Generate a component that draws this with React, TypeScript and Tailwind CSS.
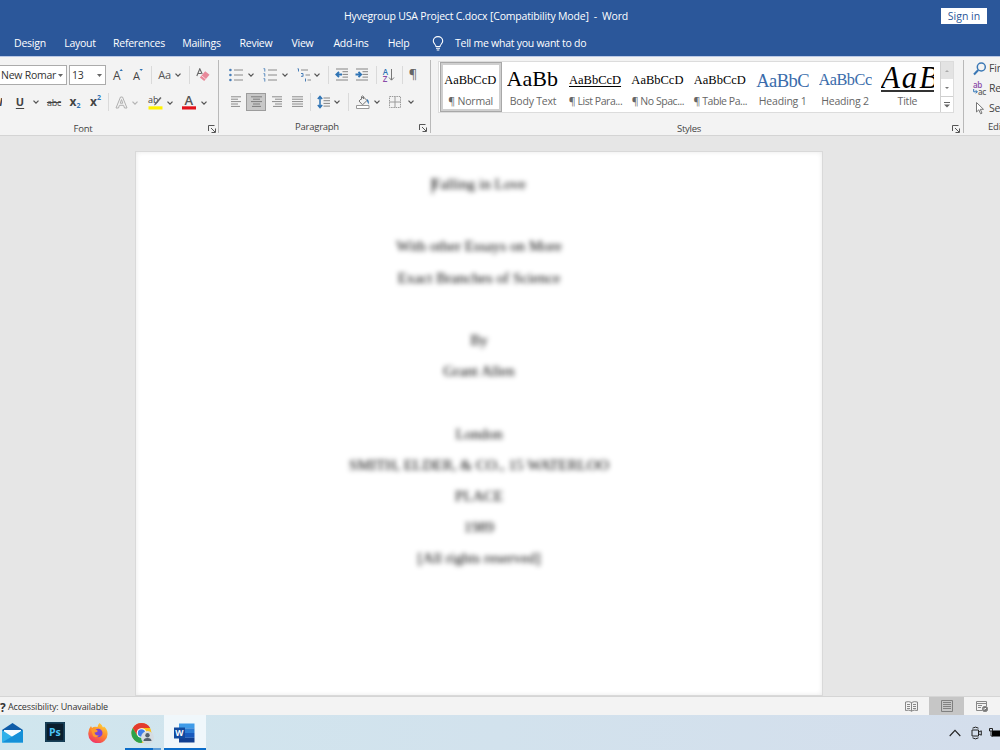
import type { ReactNode } from "react";
import { clsx } from "clsx";

function Cell({ className, children }: { className: string; children?: ReactNode }) {
  return <div className={clsx("flex h-full shrink-0 items-center justify-center", className)}>{children}</div>;
}

function Chevron({ faded = false }: { faded?: boolean }) {
  return (
    <svg className="shrink-0" width="6" height="4" viewBox="0 0 6 4" fill="none" stroke={faded ? "#b5b5b5" : "#555"} strokeWidth="1.3">
      <path d="M0.5 0.6 3 3.1 5.5 0.6" />
    </svg>
  );
}

function Sep() {
  return <div className="h-[18px] w-px bg-[#dadada]" />;
}

function Launcher() {
  return (
    <svg width="8" height="8" viewBox="0 0 8 8" fill="none" stroke="#555" strokeWidth="1">
      <path d="M0.5 6V0.5H6.5M3 3 7 7M7.5 3.5V7.5H3.5" />
    </svg>
  );
}

function GroupDivider() {
  return <div className="mt-[3px] h-[73px] w-px shrink-0 bg-[#b9b9b9]" />;
}

// linhas de alinhamento
function Lines({ rows, color = "#8c8c8c" }: { rows: number[][]; color?: string }) {
  return (
    <svg width="13" height="13" viewBox="0 0 13 13" stroke={color} strokeWidth="1">
      {rows.map(([x1, x2], i) => (
        <path key={i} d={`M${x1} ${i * 2.4 + 1.8}H${x2}`} />
      ))}
    </svg>
  );
}

function ListIcon({ numbered = false }: { numbered?: boolean }) {
  return (
    <svg className="shrink-0" width="14" height="14" viewBox="0 0 14 14">
      {[2, 7, 12].map((y) => (
        <g key={y}>
          {numbered ? (
            <path d={`M0.5 ${y - 1.3}H1.8V${y + 1.6}`} stroke="#4a7fb8" fill="none" strokeWidth="0.9" />
          ) : (
            <circle cx="1.4" cy={y} r="1.3" fill="#4a7fb8" />
          )}
          <path d={`M5 ${y}H14`} stroke="#8a8a8a" strokeWidth="1" />
        </g>
      ))}
    </svg>
  );
}

function IndentIcon({ out = false }: { out?: boolean }) {
  return (
    <svg className="shrink-0" width="14" height="13" viewBox="0 0 14 13" fill="none">
      <path d="M1 1H13M7.5 3.7H13M7.5 6.4H13M7.5 9.1H13M1 12H13" stroke="#858585" />
      <path d={out ? "M7 6.5H1.6M4 3.8 1.3 6.5 4 9.2" : "M0.5 6.5H5.9M3.5 3.8 6.2 6.5 3.5 9.2"} stroke="#2f74b5" strokeWidth="1.8" />
    </svg>
  );
}

const tabs = [
  { label: "Design", className: "w-[50px]" },
  { label: "Layout", className: "w-[50px]" },
  { label: "References", className: "w-[68px]" },
  { label: "Mailings", className: "w-[57px]" },
  { label: "Review", className: "w-[52px]" },
  { label: "View", className: "w-[41px]" },
  { label: "Add-ins", className: "w-[56px]" },
  { label: "Help", className: "w-[39px]" },
];

function TitleBar() {
  return (
    <header className="flex h-[57px] shrink-0 flex-col border-b border-[#b9c8e6] bg-[#2b579a] text-white">
      <div className="flex h-[31px] items-center pt-px">
        <div className="w-[344px]" />
        <div className="w-[597px] pt-px text-[10.5px] tracking-[-0.18px] whitespace-pre">Hyvegroup USA Project C.docx [Compatibility Mode]  -  Word</div>
        <div className="flex h-4 w-[46px] items-center justify-center bg-white pt-px text-[10.5px] text-[#2b579a]">Sign in</div>
      </div>
      <nav className="flex h-[25px] items-center pl-[5px] text-[10.5px] tracking-[-0.25px]">
        {tabs.map((t) => (
          <div key={t.label} className={clsx("shrink-0 pt-px text-center", t.className)}>{t.label}</div>
        ))}
        <svg className="ml-[14px]" width="12" height="15" viewBox="0 0 12 15" fill="none" stroke="#fff" strokeWidth="1.1">
          <path d="M4 10.5C4 8.5 1.3 7.8 1.3 5A4.7 4.4 0 0 1 10.7 5C10.7 7.8 8 8.5 8 10.5ZM4 12.3H8M4.7 14H7.3" />
        </svg>
        <div className="ml-[11px] whitespace-nowrap">Tell me what you want to do</div>
      </nav>
    </header>
  );
}

function FontGroup() {
  return (
    <section className="flex w-[218px] shrink-0 flex-col overflow-hidden">
      <div className="mt-2 flex h-5 items-center">
        <div className="flex h-5 w-[67px] shrink-0 items-center justify-between border border-l-0 border-[#ababab] bg-white pt-px pr-[3px] pl-px">
          <span className="text-[10.5px] tracking-[-0.25px] whitespace-nowrap">New Romar</span>
          <Triangle />
        </div>
        <div className="ml-0.5 flex h-5 w-[37px] shrink-0 items-center justify-between border border-[#ababab] bg-white pt-px pr-[3px] pl-[2px]">
          <span className="text-[10.5px] tracking-[-0.2px]">13</span>
          <Triangle />
        </div>
        <Cell className="ml-[2px] w-5"><LetterCaret up /></Cell>
        <Cell className="w-5"><LetterCaret /></Cell>
        <Cell className="w-[6px]"><Sep /></Cell>
        <Cell className="w-[21px] text-[11px] tracking-[-0.3px] text-[#555]">Aa</Cell>
        <Cell className="w-[6px]"><Chevron /></Cell>
        <Cell className="w-4"><Sep /></Cell>
        <Cell className="w-3">
          <svg width="14" height="14" viewBox="0 0 14 14" className="shrink-0">
            <path d="M0.8 8 3.8 0.8 6.2 6M2 5.5H5.2" stroke="#666" fill="none" strokeWidth="1.1" />
            <path d="M9.2 3.3 13.5 6.8 8.2 13 3.8 9.5Z" fill="#e8899a" />
            <path d="M5.5 7.7 9.8 11.2" stroke="#fbe3e7" strokeWidth="0.8" />
          </svg>
        </Cell>
      </div>
      <div className="mt-[7px] flex h-5 items-center text-[#444]">
        <Cell className="w-[2px] overflow-hidden text-[11px] italic"><b>I</b></Cell>
        <Cell className="ml-2 w-5 pt-px text-[11px] font-bold underline underline-offset-2">U</Cell>
        <Cell className="w-[11px] pt-px"><Chevron /></Cell>
        <Cell className="w-[26px] pt-[2px] text-[9px] tracking-[-0.2px] line-through">abc</Cell>
        <Cell className="w-[16px] pt-px text-[12px] font-bold">x<span className="mt-2 text-[7px] text-[#2f74b5]">2</span></Cell>
        <Cell className="w-[25px] pt-px text-[12px] font-bold">x<span className="mb-2 text-[7px] text-[#2f74b5]">2</span></Cell>
        <Cell className="w-px pt-px"><Sep /></Cell>
        <Cell className="w-[24px] pt-[2px]">
          <svg width="13" height="13" viewBox="0 0 13 13" fill="none" stroke="#b0b0b0" strokeWidth="1">
            <path d="M1 12 5.5 1H7.5L12 12H9.5L8.6 9.3H4.4L3.5 12ZM5.2 7.2H7.8L6.5 3.6Z" />
          </svg>
        </Cell>
        <Cell className="w-1 pt-[2px]"><Chevron faded /></Cell>
        <Cell className="ml-[9px] w-[18px] pt-[2px]">
          <svg className="overflow-visible" width="15" height="15" viewBox="0 0 15 15">
            <text x="0" y="8" fontSize="9" fill="#444">ab</text>
            <path d="M13.5 3 8 9.5 6 10.5 6.8 8.5 12.3 2Z" fill="#666" />
            <path d="M0.5 11.3H14.5V14.5H0.5Z" fill="#fff200" />
          </svg>
        </Cell>
        <Cell className="w-3 pt-[2px]"><Chevron /></Cell>
        <Cell className="ml-[5px] w-[16px] pt-[2px]">
          <svg className="overflow-visible" width="14" height="15" viewBox="0 0 14 15">
            <text x="2.6" y="10" fontSize="13" fontWeight="600" fill="#555">A</text>
            <path d="M0 11.3H14V14.5H0Z" fill="#e3131c" />
          </svg>
        </Cell>
        <Cell className="w-[14px] pt-[2px]"><Chevron /></Cell>
      </div>
      <GroupLabel className="pr-[2px] pl-[18px]">Font</GroupLabel>
    </section>
  );
}

function Triangle() {
  return (
    <svg width="5" height="3" viewBox="0 0 5 3" className="shrink-0" fill="#666">
      <path d="M0 0H5L2.5 3Z" />
    </svg>
  );
}

function LetterCaret({ up = false }: { up?: boolean }) {
  return (
    <svg className="overflow-visible" width="12" height="14" viewBox="0 0 12 14">
      <text x="1" y="12" fontSize={up ? 12 : 11} fill="#444">A</text>
      <path d={up ? "M7.5 3 9.2 1 10.9 3Z" : "M7.5 1H10.9L9.2 3Z"} fill="#2f74b5" />
    </svg>
  );
}

function GroupLabel({ className, children }: { className: string; children: ReactNode }) {
  return (
    <div className={clsx("mt-[10px] flex h-4 items-center justify-between text-[9.5px] tracking-[-0.25px] text-[#444]", className)}>
      <div className="w-[130px] text-center">{children}</div>
      <Launcher />
    </div>
  );
}

function ParagraphGroup() {
  return (
    <section className="flex w-[211px] shrink-0 flex-col">
      <div className="mt-2 flex h-5 items-center">
        <Cell className="ml-[9px] w-[15px]"><ListIcon /></Cell>
        <Cell className="w-4"><Chevron /></Cell>
        <Cell className="ml-[2px] w-[17px]"><ListIcon numbered /></Cell>
        <Cell className="w-[13px]"><Chevron /></Cell>
        <Cell className="ml-[5px] w-[15px]">
          <svg width="14" height="14" viewBox="0 0 14 14" fill="none">
            <path d="M0.5 0.8H1.5V3.5M4 5.5H6V8M4 8.3H6.3M8.5 10.5V13.5" stroke="#4a7fb8" />
            <path d="M4 2H11M8.5 7H13M10.5 12H14" stroke="#8a8a8a" />
          </svg>
        </Cell>
        <Cell className="w-[11px]"><Chevron /></Cell>
        <Cell className="w-[13px]"><Sep /></Cell>
        <Cell className="w-[13px]"><IndentIcon out /></Cell>
        <Cell className="w-[28px]"><IndentIcon /></Cell>
        <Sep />
        <Cell className="ml-[5px] w-[14px]">
          <div className="flex items-center">
            <div className="flex flex-col text-[8px] leading-[7px] font-semibold">
              <span className="text-[#2f74b5]">A</span>
              <span className="text-[#8a4ba8]">Z</span>
            </div>
            <svg width="7" height="14" viewBox="0 0 7 14" fill="none" stroke="#777">
              <path d="M3.5 1V12M1 9.5 3.5 12.2 6 9.5" />
            </svg>
          </div>
        </Cell>
        <Cell className="w-[12px]"><Sep /></Cell>
        <Cell className="w-[10px] text-[13px] text-[#666]">¶</Cell>
      </div>
      <div className="mt-2 flex h-5 items-center">
        <Cell className="ml-[7px] w-5"><Lines rows={[[1, 11], [1, 8], [1, 11], [1, 8], [1, 10]]} /></Cell>
        <Cell className="w-5 border border-[#9c9c9c] bg-[#c8c8c8]"><Lines rows={[[1, 12], [3, 10], [1, 12], [3, 10], [2, 11]]} color="#7c7c7c" /></Cell>
        <Cell className="w-[21px]"><Lines rows={[[2, 12], [5, 12], [2, 12], [5, 12], [3, 12]]} /></Cell>
        <Cell className="w-[21px]"><Lines rows={[[1, 12], [1, 12], [1, 12], [1, 12], [1, 12]]} /></Cell>
        <Cell className="w-[4px]"><Sep /></Cell>
        <Cell className="ml-[2px] w-[18px]">
          <svg width="13" height="14" viewBox="0 0 13 14" fill="none">
            <path d="M3 1.5V12.5M0.8 4 3 1.5 5.2 4M0.8 10 3 12.5 5.2 10" stroke="#2f74b5" strokeWidth="1.5" />
            <path d="M6.5 3H13M6.5 5.7H13M6.5 8.4H13M6.5 11.1H13" stroke="#858585" />
          </svg>
        </Cell>
        <Cell className="w-[10px]"><Chevron /></Cell>
        <Cell className="w-[12px]"><Sep /></Cell>
        <Cell className="w-[17px]">
          <svg width="14" height="14" viewBox="0 0 14 14" fill="none">
            <path d="M3 6 7.3 1.8 11 5.5 6.5 9.8ZM5.5 4.5V1.5Q6.5 0.2 7.5 1.5V4" stroke="#777" />
            <path d="M10.8 4Q13.6 5 12.5 9.5L11 6Z" fill="#2f74b5" />
            <path d="M0.5 10.5H13V13.5H0.5Z" stroke="#999" fill="#fff" />
          </svg>
        </Cell>
        <Cell className="w-3"><Chevron /></Cell>
        <Cell className="w-[24px]">
          <svg width="12" height="12" viewBox="0 0 12 12" fill="none" stroke="#9a9a9a">
            <path d="M0.5 0.5H11.5V11.5H0.5Z" strokeDasharray="1.5 0.8" />
            <path d="M6 0.5V11.5M0.5 6H11.5" />
          </svg>
        </Cell>
        <Cell className="w-2"><Chevron /></Cell>
      </div>
      <div className="-mt-px">
        <GroupLabel className="pr-[3px] pl-[33px]">Paragraph</GroupLabel>
      </div>
    </section>
  );
}

const estilos = [
  { label: "¶ Normal", sample: "AaBbCcD", className: "pt-[12px] text-[12.5px] text-black", active: true },
  { label: "Body Text", sample: "AaBb", className: "pt-[6px] text-[22px] text-black" },
  { label: "¶ List Para...", sample: "AaBbCcD", className: "pt-[12px] text-[12.5px] text-black underline underline-offset-2", tight: true },
  { label: "¶ No Spac...", sample: "AaBbCcD", className: "pt-[12px] text-[12.5px] text-black", tight: true },
  { label: "¶ Table Pa...", sample: "AaBbCcD", className: "pt-[12px] text-[12.5px] text-black", tight: true },
  { label: "Heading 1", sample: "AaBbC", className: "pt-[10px] text-[18.5px] tracking-[-0.5px] text-[#3a6cab]" },
  { label: "Heading 2", sample: "AaBbCcI", className: "pt-[10px] text-[16.3px] tracking-[-0.5px] text-[#3a6cab]" },
  { label: "Title", sample: "AaB", className: "text-[31px] tracking-[2px] italic text-black border-b-2 border-[#333]" },
];

function StylesGroup() {
  return (
    <section className="flex w-[532px] shrink-0 flex-col pl-[7px]">
      <div className="mt-[4px] flex h-[52px] w-[516px] border border-[#dcdcdc] bg-white">
        <div className="flex w-[501px] pl-px">
          {estilos.map((e) => (
            <div
              key={e.label}
              className={clsx(
                "flex h-[50px] w-[62.4px] shrink-0 flex-col items-center",
                e.active && "shadow-[inset_0_0_0_1px_#a8a8a8,inset_0_0_0_3px_#cfcfcf]"
              )}
            >
              <div className="flex h-[32px] w-[54px] justify-start">
                <div
                  className={clsx(
                    "flex h-[30px] w-[53px] overflow-hidden font-['Liberation_Serif',serif] leading-none whitespace-nowrap",
                    e.className
                  )}
                >
                  {e.sample}
                </div>
              </div>
              <div
                className={clsx(
                  "pr-px text-[10.5px] leading-[14px] whitespace-nowrap text-[#666]",
                  e.tight ? "tracking-[-0.45px]" : "tracking-[-0.2px]"
                )}
              >
                {e.label}
              </div>
            </div>
          ))}
        </div>
        <div className="flex w-[13px] flex-col border-l border-[#d0d0d0]">
          <div className="flex h-[17px] items-center justify-center bg-[#e3e3e3]">
            <svg width="4" height="2" viewBox="0 0 4 2" fill="#aaa"><path d="M0 2H4L2 0Z" /></svg>
          </div>
          <div className="flex h-[18px] items-center justify-center border-b border-[#d0d0d0]">
            <svg width="4" height="2" viewBox="0 0 4 2" fill="#777"><path d="M0 0H4L2 2Z" /></svg>
          </div>
          <div className="flex flex-1 items-center justify-center">
            <svg width="6" height="6" viewBox="0 0 6 6" fill="#666"><path d="M0 0H6V1H0ZM0 2.5H6L3 5.5Z" /></svg>
          </div>
        </div>
      </div>
      <div className="mt-[8px] flex h-4 items-center justify-between pr-[3px] pl-[186px] text-[9.5px] tracking-[-0.25px] text-[#444]">
        <div className="w-[130px] pt-px text-center">Styles</div>
        <Launcher />
      </div>
    </section>
  );
}

function EditingGroup() {
  return (
    <section className="flex w-[36px] shrink-0 flex-col overflow-hidden pl-[9px] text-[10.5px] tracking-[-0.2px] text-[#444]">
      <div className="mt-[2px] flex h-[21px] items-center gap-[2px]">
        <svg className="shrink-0" width="14" height="14" viewBox="0 0 14 14" fill="none" stroke="#3b78b5" strokeWidth="1.5">
          <circle cx="8.3" cy="5" r="4" />
          <path d="M5.3 8 1 12.5" strokeWidth="2" />
        </svg>
        Find
      </div>
      <div className="flex h-5 items-center gap-[2px]">
        <div className="flex w-[14px] shrink-0 flex-col text-[8px] leading-[7px] font-semibold tracking-[-0.3px]">
          <span className="text-[#8a4ba8]">ab</span>
          <span className="flex items-center text-[#666]">
            <svg width="5" height="5" viewBox="0 0 5 5" fill="none" stroke="#2f74b5">
              <path d="M0.7 0V2.8H4.2M2.8 1.2 4.3 2.8 2.8 4.4" />
            </svg>
            ac
          </span>
        </div>
        Replace
      </div>
      <div className="flex h-[21px] items-center gap-[2px] pt-px">
        <svg className="shrink-0" width="14" height="14" viewBox="0 0 14 14" fill="#fff" stroke="#777">
          <path d="M3.5 1.5V11L5.8 8.8 7.6 12.8 9 12.2 7.3 8.3H10.5Z" />
        </svg>
        Select
      </div>
      <div className="pt-px pl-[15px] text-[9.5px] leading-4">Editing</div>
    </section>
  );
}

// cada string vazia é uma linha em branco
const pagina = [
  "Falling in Love",
  "",
  "With other Essays on More",
  "Exact Branches of Science",
  "",
  "By",
  "Grant Allen",
  "",
  "London",
  "SMITH, ELDER, & CO., 15 WATERLOO",
  "PLACE",
  "1989",
  "[All rights reserved]",
];

function DocumentArea() {
  return (
    <main className="flex h-[560px] shrink-0 overflow-hidden bg-[#e6e6e6] pt-[15px] pl-[135px]">
      <div className="h-[545px] w-[688px] border border-[#d9d9d9] bg-white pt-[16px] shadow-[inset_0_0_5px_#e9e9e9]">
        <div className="text-center font-['Liberation_Serif',serif] text-[15.2px] text-black blur-[2.4px]">
          {pagina.map((linha, i) => (
            <div key={i} className="h-[31.2px] leading-[31.2px]">
              {i === 0 && <span className="mr-[-1px] inline-block h-4 w-px bg-black align-middle" />}
              {linha}
            </div>
          ))}
        </div>
      </div>
    </main>
  );
}

function StatusBar() {
  return (
    <div className="flex h-[19px] shrink-0 items-center border-t border-[#d5d5d5] bg-[#f3f3f3] text-[9px] tracking-[-0.15px] text-[#333]">
      <div className="w-2 overflow-hidden pt-[3px] text-[12px] leading-[15px] font-bold">?</div>
      <div className="w-[886px] pt-px">Accessibility: Unavailable</div>
      <Cell className="w-[35px]">
        <svg width="13" height="11" viewBox="0 0 13 11" fill="none" stroke="#888">
          <path d="M6.5 1.5V10.5M6.5 1.5Q4 0 0.5 1V9.5Q4 8.5 6.5 10Q9 8.5 12.5 9.5V1Q9 0 6.5 1.5M2 3.5H5M2 5.5H5M2 7.5H5M8 3.5H11M8 5.5H11M8 7.5H11" />
        </svg>
      </Cell>
      <Cell className="w-[35px] bg-[#c6c6c6]">
        <svg width="12" height="12" viewBox="0 0 12 12" fill="none" stroke="#808080">
          <path d="M0.5 0.5H11.5V11.5H0.5ZM2 2.5H10M2 4.5H10M2 6.5H10M2 8.5H10" />
        </svg>
      </Cell>
      <Cell className="w-[35px]">
        <svg width="12" height="11" viewBox="0 0 12 11" fill="none" stroke="#888">
          <path d="M6 9.5H0.5V0.5H10.5V5M0.5 2.5H10.5M2 4.5H6M2 6.5H5" />
          <circle cx="9" cy="8" r="2.7" fill="#777" />
          <path d="M7.5 8H9L10 7" stroke="#fff" />
        </svg>
      </Cell>
    </div>
  );
}

function Taskbar() {
  return (
    <footer className="flex h-[35px] shrink-0 bg-linear-to-r from-[#d0e6ee] to-[#d4deec]">
      <Cell className="w-[25px]">
        <svg width="21" height="20" viewBox="0 0 21 20">
          <path d="M0 7 10.5 0 21 7V10H0Z" fill="#0f5da8" />
          <path d="M2 7H19V14H2Z" fill="#f4fbff" />
          <path d="M0 7 10.5 14 21 7V19.5H0Z" fill="#2fb1ea" />
          <path d="M0 19.5 21 7V19.5Z" fill="#1590d8" />
        </svg>
      </Cell>
      <Cell className="ml-5 w-5 pb-[2px]">
        <svg width="20" height="20" viewBox="0 0 20 20">
          <path d="M0 0H20V20H0Z" fill="#123247" />
          <path d="M1 1H19V19H1Z" fill="#0a1d2c" stroke="#1d4e6b" />
          <text x="4" y="13.5" fontSize="10.5" fontWeight="700" fill="#4cc3f5">Ps</text>
        </svg>
      </Cell>
      <Cell className="ml-[22px] w-[22px]">
        <svg width="20" height="20" viewBox="0 0 20 20">
          <defs>
            <linearGradient id="fox" x1="0.8" y1="0" x2="0.3" y2="1">
              <stop offset="0" stopColor="#ffd83a" />
              <stop offset="0.5" stopColor="#ff8a2a" />
              <stop offset="1" stopColor="#f0306a" />
            </linearGradient>
          </defs>
          <path d="M11.5 0Q14 1.5 15 4.5L16 3.5Q20 7 19.5 11.5A9.6 9 0 0 1 0.3 11Q0 6.5 3 3L4 5Q6 3 9.5 4Q10 1.5 11.5 0Z" fill="url(#fox)" />
          <circle cx="10.2" cy="10" r="4.3" fill="#7b45d6" />
          <path d="M3 6Q7 5 10 8Q8.5 9.5 6.5 9.5Q7 13 11 12.5Q8 15.5 5 13Z" fill="#ff9a2c" />
        </svg>
      </Cell>
      <div className="ml-[16px] flex w-[36px] flex-col">
        <div className="flex h-[33px] items-center justify-center pt-[3px]">
          <svg width="24" height="23" viewBox="0 0 24 23">
            <circle cx="10.5" cy="11" r="10" fill="#fbc116" />
            <path d="M1.8 6A10 10 0 0 1 19.2 6H10.5L6.2 13.5Z" fill="#e33b2e" />
            <path d="M1.8 6A10 10 0 0 0 10.5 21L14.8 13.5H6.2Z" fill="#2da24c" />
            <circle cx="10.5" cy="11" r="4.8" fill="#fff" />
            <circle cx="10.5" cy="11" r="3.7" fill="#3f7fe8" />
            <circle cx="16.5" cy="15.5" r="6.5" fill="#d5dce2" />
            <circle cx="16.5" cy="13.2" r="2.2" fill="#53606c" />
            <path d="M12.5 19Q12.5 16 16.5 16T20.5 19Z" fill="#53606c" />
          </svg>
        </div>
        <div className="flex h-[2px]">
          <div className="w-[28px] bg-[#0a6cc9]" />
          <div className="w-[8px] bg-[#5c9dd8]" />
        </div>
      </div>
      <div className="ml-[3px] flex w-[42px] flex-col bg-[#f0f7fb]">
        <div className="flex h-[33px] items-center justify-center pt-[2px] pr-[1px]">
          <svg width="21" height="20" viewBox="0 0 21 20">
            <path d="M5 0.5H20.5V5.3H5Z" fill="#3f9be8" />
            <path d="M5 5.3H20.5V10H5Z" fill="#2b7cd3" />
            <path d="M5 10H20.5V14.8H5Z" fill="#185abd" />
            <path d="M5 14.8H20.5V19.5H5Z" fill="#103f91" />
            <path d="M0 4.5H11V15.5H0Z" fill="#124a9e" />
            <text x="1.2" y="13" fontSize="8.5" fontWeight="700" fill="#fff">W</text>
          </svg>
        </div>
        <div className="h-[2px] bg-[#0a6cc9]" />
      </div>
      <div className="flex flex-1 items-center justify-end">
        <svg width="12" height="8" viewBox="0 0 12 8" fill="none" stroke="#222" strokeWidth="1.1">
          <path d="M0.7 7 6 1.4 11.3 7" />
        </svg>
        <svg className="ml-[10px]" width="12" height="14" viewBox="0 0 12 14" fill="none" stroke="#222">
          <path d="M1 4H7.5V10H1ZM7.5 6.2 10.3 4.8V9.2L7.5 7.8M1.5 2.2Q4.5 0 7.5 2.2M1.5 11.8Q4.5 14 7.5 11.8" />
        </svg>
        <svg className="ml-[6px]" width="11" height="12" viewBox="0 0 11 12">
          <path d="M3 3.5H11V9.5H3Z" fill="#000" />
          <path d="M0.5 1.5H3.5V4H0.5ZM2 4V9H4" fill="none" stroke="#222" />
        </svg>
      </div>
    </footer>
  );
}

export default function App() {
  return (
    <div className="flex h-[750px] w-[1000px] flex-col overflow-hidden bg-[#e6e6e6] font-['Open_Sans','Noto_Sans',sans-serif]">
      <TitleBar />
      <div className="flex h-[79px] shrink-0 overflow-hidden border-b border-[#d4d4d4] bg-[#f3f3f3] text-[#333]">
        <FontGroup />
        <GroupDivider />
        <ParagraphGroup />
        <GroupDivider />
        <StylesGroup />
        <GroupDivider />
        <EditingGroup />
      </div>
      <DocumentArea />
      <StatusBar />
      <Taskbar />
    </div>
  );
}
